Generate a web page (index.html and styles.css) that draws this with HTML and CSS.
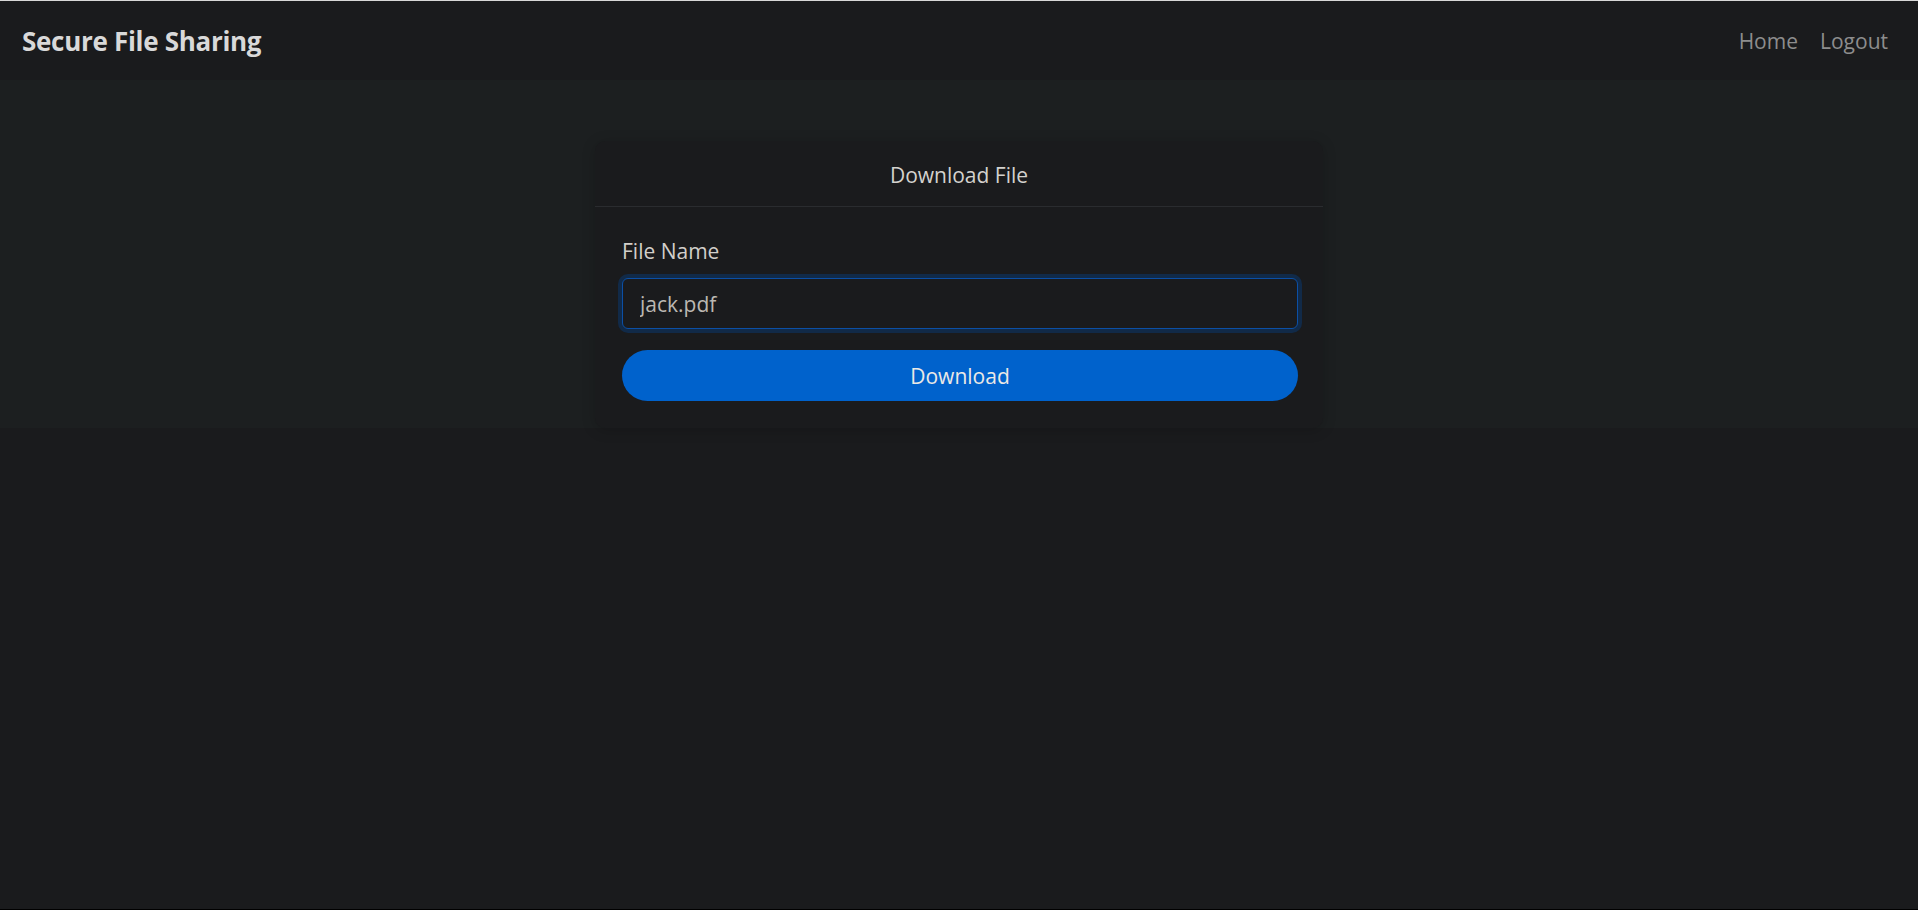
FILE: index.html
```html
<!DOCTYPE html>
<html lang="en">
<head>
<meta charset="utf-8">
<title>Secure File Sharing</title>
<link rel="stylesheet" href="styles.css">
</head>
<body>
<div class="page">
  <nav class="navbar">
    <a class="brand" href="#">Secure File Sharing</a>
    <div class="nav-links">
      <a class="nav-link" href="#">Home</a>
      <a class="nav-link" href="#">Logout</a>
    </div>
  </nav>
  <section class="hero">
    <div class="card">
      <div class="card-header">Download File</div>
      <form class="card-body">
        <label class="label" for="fname">File Name</label>
        <input class="input" id="fname" type="text" value="jack.pdf">
        <button class="btn" type="button">Download</button>
      </form>
    </div>
  </section>
</div>
</body>
</html>
```

FILE: styles.css
```css
* { box-sizing: border-box; }
html, body { margin: 0; padding: 0; height: 100%; }
body {
  background: #1a1b1d;
  font-family: "Open Sans", "Noto Sans", Arial, sans-serif;
  color: #d6d3ce;
}
.page {
  height: 910px;
  border-top: 1px solid #d8d8d8;
  border-bottom: 1px solid #000;
  background: #1a1b1d;
}
.navbar {
  height: 79px;
  display: flex;
  align-items: center;
  justify-content: space-between;
  padding: 0 30px 0 22px;
  background: #1a1b1d;
}
.brand {
  font-size: 26px;
  font-weight: 700;
  color: #d9d9d9;
  text-decoration: none;
  letter-spacing: -0.3px;
}
.nav-links { display: flex; gap: 22px; }
.nav-link {
  font-size: 21px;
  color: #8d8d8d;
  text-decoration: none;
}
.hero {
  background: #1c1f20;
  padding-top: 61px;
}
.card {
  width: 728px;
  margin: 0 auto;
  background: #1a1b1d;
  border-radius: 10px;
  box-shadow: 0 2px 14px rgba(0, 0, 0, 0.18);
}
.card-header {
  height: 66px;
  display: flex;
  align-items: center;
  justify-content: center;
  border-bottom: 1px solid #2a2c2f;
  font-size: 21px;
  color: #d4d2ce;
  padding-top: 2px;
}
.card-body {
  display: flex;
  flex-direction: column;
  padding: 28px 25px 27px 27px;
  margin: 0;
}
.label {
  font-size: 21px;
  line-height: 33px;
  color: #d2cfca;
  margin-bottom: 10px;
}
.input {
  height: 51px;
  border: 1px solid #0b4fa5;
  border-radius: 6px;
  background: #1a1b1d;
  box-shadow: 0 0 0 4px #112a48;
  color: #bcb8b2;
  font-family: inherit;
  font-size: 21px;
  padding: 0 17px;
  outline: none;
}
.btn {
  margin-top: 21px;
  height: 51px;
  border: none;
  border-radius: 26px;
  background: #0062cc;
  color: #ebe9e6;
  font-family: inherit;
  font-size: 21px;
  cursor: pointer;
}
```
